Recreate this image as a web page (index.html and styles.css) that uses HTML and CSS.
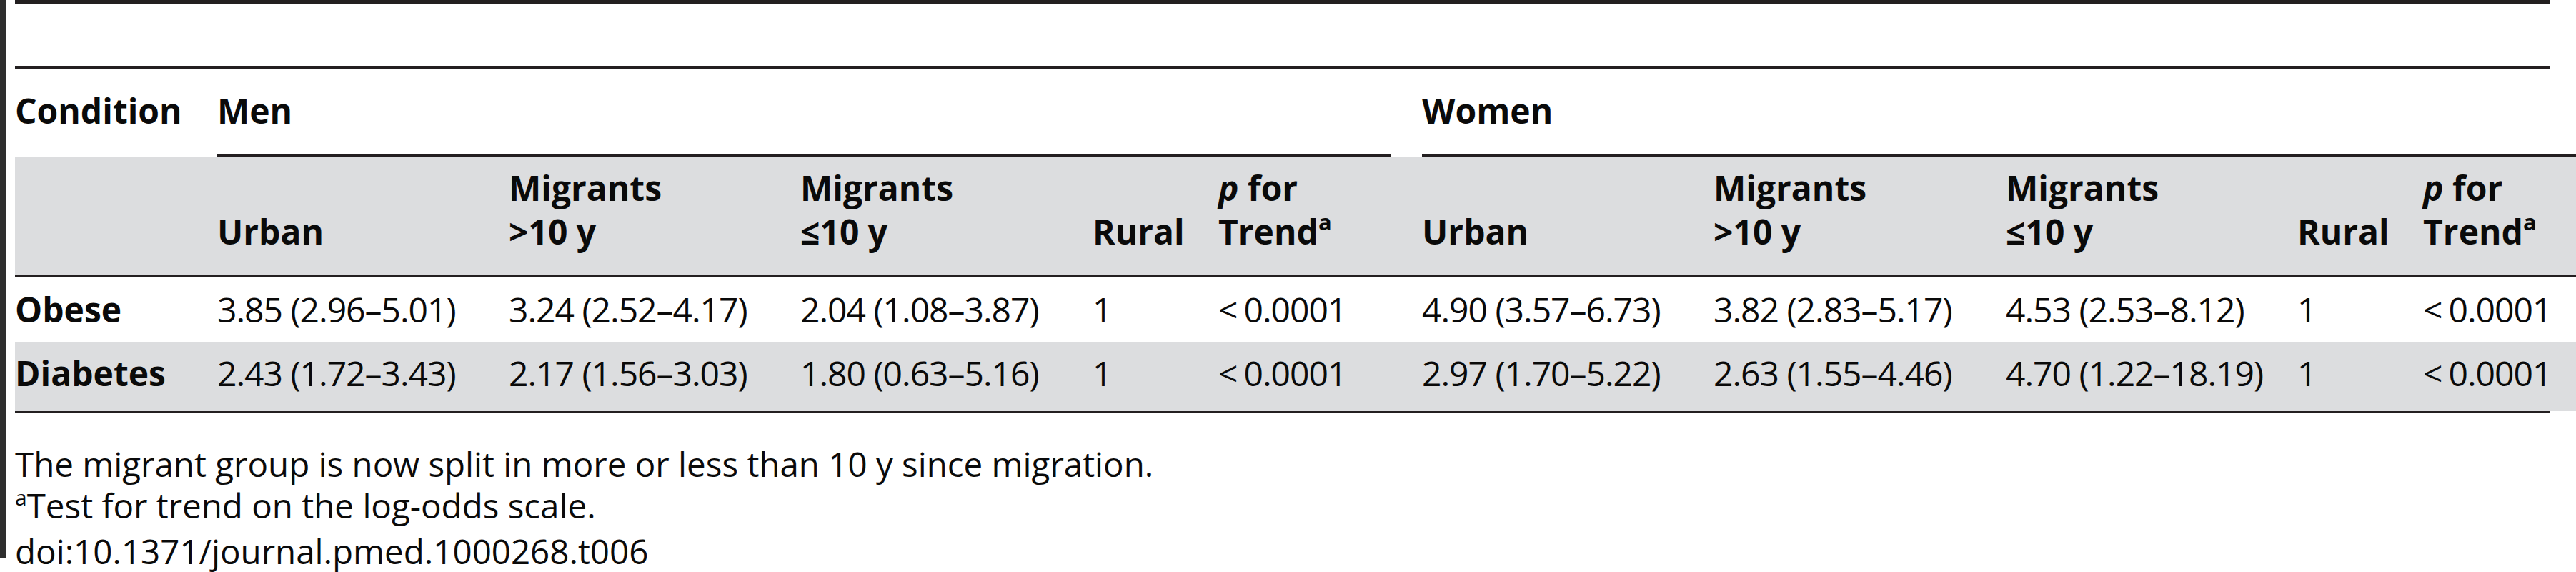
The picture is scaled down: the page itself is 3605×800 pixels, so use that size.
FILE: index.html
```html
<!DOCTYPE html>
<html lang="en">
<head>
<meta charset="utf-8">
<title>Table 6</title>
<link rel="stylesheet" href="styles.css">
</head>
<body>
<div class="page">
  <div class="edge"></div>
  <div class="figure">
    <div class="figure-top"></div>
    <div class="caption-gap"></div>
    <div class="table-frame">
      <table class="data">
        <colgroup>
          <col class="col-cond">
          <col class="col-est">
          <col class="col-est">
          <col class="col-est-wide">
          <col class="col-rural">
          <col class="col-p">
          <col class="col-est">
          <col class="col-est-wide">
          <col class="col-est">
          <col class="col-rural">
          <col class="col-p-last">
        </colgroup>
        <thead>
          <tr class="group-row">
            <th class="cond-head">Condition</th>
            <th colspan="5" class="group men"><div class="group-label">Men</div></th>
            <th colspan="5" class="group women"><div class="group-label">Women</div></th>
          </tr>
          <tr class="sub-row">
            <th></th>
            <th>Urban</th>
            <th>Migrants<br>&gt;10&nbsp;y</th>
            <th>Migrants<br>&le;10&nbsp;y</th>
            <th>Rural</th>
            <th><i>p</i> for<br>Trend<sup>a</sup></th>
            <th>Urban</th>
            <th>Migrants<br>&gt;10&nbsp;y</th>
            <th>Migrants<br>&le;10&nbsp;y</th>
            <th>Rural</th>
            <th><i>p</i> for<br>Trend<sup>a</sup></th>
          </tr>
        </thead>
        <tbody>
          <tr class="row-first">
            <th>Obese</th>
            <td>3.85 (2.96–5.01)</td>
            <td>3.24 (2.52–4.17)</td>
            <td>2.04 (1.08–3.87)</td>
            <td>1</td>
            <td><span class="lt">&lt;</span>0.0001</td>
            <td>4.90 (3.57–6.73)</td>
            <td>3.82 (2.83–5.17)</td>
            <td>4.53 (2.53–8.12)</td>
            <td>1</td>
            <td><span class="lt">&lt;</span>0.0001</td>
          </tr>
          <tr class="row-last shaded">
            <th>Diabetes</th>
            <td>2.43 (1.72–3.43)</td>
            <td>2.17 (1.56–3.03)</td>
            <td>1.80 (0.63–5.16)</td>
            <td>1</td>
            <td><span class="lt">&lt;</span>0.0001</td>
            <td>2.97 (1.70–5.22)</td>
            <td>2.63 (1.55–4.46)</td>
            <td>4.70 (1.22–18.19)</td>
            <td>1</td>
            <td><span class="lt">&lt;</span>0.0001</td>
          </tr>
        </tbody>
      </table>
    </div>
    <div class="notes">
      <p>The migrant group is now split in more or less than 10 y since migration.</p>
      <p><sup>a</sup>Test for trend on the log-odds scale.</p>
      <p class="doi">doi:10.1371/journal.pmed.1000268.t006</p>
    </div>
  </div>
</div>
</body>
</html>
```

FILE: styles.css
```css
html, body {
  margin: 0;
  padding: 0;
  background: #ffffff;
  overflow: hidden;
}

body {
  font-family: "Open Sans", "Noto Sans", sans-serif;
  color: #0a0a0a;
}

.page {
  display: flex;
  align-items: flex-start;
}

.edge {
  flex: none;
  width: 8px;
  height: 780px;
  background: #2e2e2e;
}

.figure {
  flex: none;
  width: 3548px;
  margin-left: 13px;
}

.figure-top {
  height: 6px;
  background: #231f20;
}

.caption-gap {
  height: 87px;
}

.table-frame {
  border-top: 3px solid #231f20;
  border-bottom: 3px solid #231f20;
}

.data {
  width: 3584px;
  table-layout: fixed;
  border-collapse: separate;
  border-spacing: 0;
}

.col-cond { width: 283px; }
.col-est { width: 408px; }
.col-est-wide { width: 409px; }
.col-rural { width: 176px; }
.col-p { width: 285px; }
.col-p-last { width: 214px; }

.data th,
.data td {
  padding: 0;
  text-align: left;
  vertical-align: top;
  line-height: 61px;
  white-space: nowrap;
}

.data th {
  font-size: 48px;
  font-weight: 700;
}

.data td {
  font-size: 48px;
  font-weight: 400;
  letter-spacing: -1px;
}

.data i {
  font-style: italic;
}

.data sup {
  font-size: 31px;
  line-height: 0;
  vertical-align: 20px;
}

/* first header row */
.group-row th {
  padding-top: 28px;
}

.group-row .men {
  padding-right: 43px;
}

.group-row .women {
  padding-right: 0;
}

.group-label {
  padding-bottom: 31px;
  border-bottom: 3px solid #231f20;
}

/* second header row */
.sub-row th {
  background: #dcdddf;
  padding-top: 13px;
  padding-bottom: 31px;
  border-bottom: 3px solid #231f20;
  vertical-align: bottom;
}

/* body rows */
.row-first th,
.row-first td {
  padding-top: 14px;
  padding-bottom: 16px;
}

.row-last th,
.row-last td {
  padding-top: 12px;
  padding-bottom: 23px;
}

.shaded th,
.shaded td {
  background: #dcdddf;
}

.lt {
  letter-spacing: 0;
  margin-right: 8px;
}

/* footnotes */
.notes {
  margin-top: 42px;
  font-size: 47.5px;
  line-height: 58px;
}

.notes p {
  margin: 0;
  white-space: nowrap;
}

.notes .doi {
  margin-top: 6px;
}

.notes sup {
  font-size: 30px;
  line-height: 0;
  vertical-align: 18px;
}
```
